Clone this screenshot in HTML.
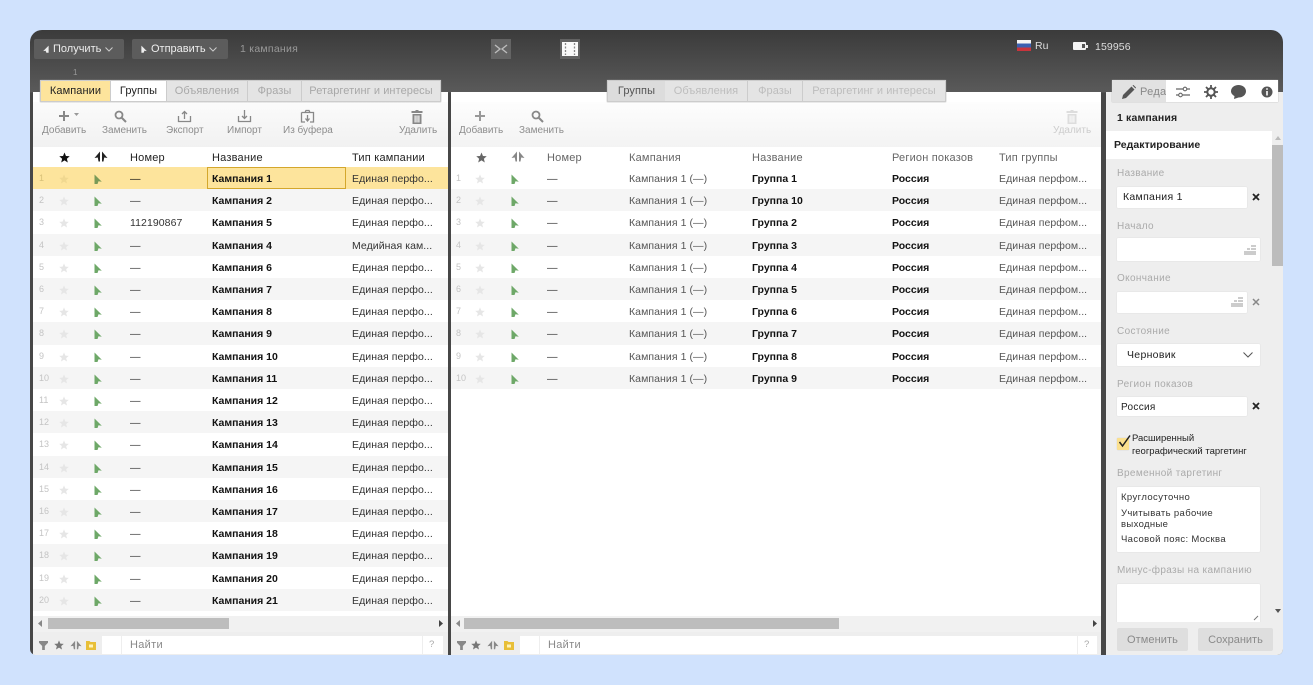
<!DOCTYPE html>
<html lang="ru"><head><meta charset="utf-8"><title>Директ Коммандер</title>
<style>
*{box-sizing:border-box}
html,body{margin:0;padding:0;width:1313px;height:685px;overflow:hidden;background:#d0e2fd;font-family:"Liberation Sans","Noto Sans CJK SC",sans-serif}
#w{position:absolute;left:30px;top:30px;width:1253px;height:625px;border-radius:12px 12px 6px 6px;overflow:hidden;background:linear-gradient(#3b3b3b 0,#5a5a5a 62px,#474747 63px);filter:blur(.3px)}
.a{position:absolute;white-space:nowrap}
#root{position:absolute;left:-30px;top:-30px;width:1313px;height:685px}
.btn{background:#5c5c5c;border-radius:2px;color:#eee;font-size:11px;line-height:20px;height:20px}
.tabs{position:absolute;top:80px;height:22px;border:1px solid #ccc;background:#e4e4e4;z-index:3;box-shadow:0 0 1px #999}
.tab{position:absolute;top:0;height:20px;line-height:21px;font-size:11px;text-align:center;color:#a8a8a8;letter-spacing:.08px;border-right:1px solid #ccc;white-space:nowrap;overflow:hidden}
.panel{position:absolute;top:92px;background:#fff;overflow:hidden;height:563px}
.tl{position:absolute;top:125px;font-size:10px;line-height:12px;color:#8d8d8d;letter-spacing:0;white-space:nowrap}
.hd{position:absolute;top:151px;font-size:11px;line-height:14px;color:#222;letter-spacing:.2px;white-space:nowrap}
.g .hd{color:#666}
.r{position:absolute;height:22.2px;width:100%;font-size:10.5px;line-height:24px;color:#333;letter-spacing:.07px}
.r span{position:absolute;top:0;white-space:nowrap}
.e{background:#f5f5f5}
.sel{background:#fde49c}
.r b{color:#111;letter-spacing:0}
.r .n{font-size:9px;color:#c4c4c4;letter-spacing:0;line-height:22px}
.r svg{position:absolute}
.ic{position:absolute;fill:#888}
.lb{position:absolute;left:1117px;font-size:10px;line-height:12px;color:#aaa;letter-spacing:.35px;white-space:nowrap}
.in{position:absolute;left:1117px;background:#fff;border-radius:1px;box-shadow:0 0 1px #ccc;font-size:10px;color:#222;letter-spacing:.3px;white-space:nowrap}
</style></head><body>
<svg width="0" height="0" style="position:absolute"><defs>
<symbol id="st" viewBox="0 0 12 12"><path d="M6 .5 7.6 4.4 11.7 4.7 8.6 7.3 9.600 11.4 6 9.2 2.4 11.4 3.400 7.3 .3 4.7 4.4 4.4Z"/></symbol>
<symbol id="fl" viewBox="0 0 8 10"><path d="M.5 .5 7.800 7.800 4.500 7.300 3.500 10H.5Z"/></symbol>
<symbol id="tw" viewBox="0 0 14 10"><path d="M6 0 6 10 4.500 10 3.800 6 .5 6.500ZM8 0 8 10 9.500 10 10.200 6 13.500 6.500Z"/></symbol>
<symbol id="fi" viewBox="0 0 10 10"><path d="M0 0H10V2L6.5 5.5V10H3.5V5.5L0 2Z"/></symbol>
<symbol id="ca" viewBox="0 0 10 10"><path d="M0 1H3.5L4.5 2H10V10H0Z" fill="#e8bf38"/><rect x="3" y="4.5" width="4" height="3" fill="#fff3b8"/></symbol>
<symbol id="tr" viewBox="0 0 12 14"><path d="M4.5 0H7.5V1H11.5V3H.5V1H4.5ZM1.5 4H10.5V14H1.5ZM3.5 5.5V12.5H4.7V5.5ZM5.4 5.5V12.5H6.6V5.5ZM7.3 5.5V12.5H8.5V5.5Z"/></symbol>
</defs></svg>
<div id="w"><div id="root">

<div class="a btn" style="left:34px;top:39px;width:90px"><svg class="ic" style="left:9px;top:6px;fill:#eee" width="6" height="8"><use href="#fl" transform="matrix(-1 0 0 1 6 0)"/></svg><span class="a" style="left:19px;top:0">Получить</span><svg class="a" style="left:71px;top:8px" width="8" height="5"><path d="M.5.5 4 4 7.5.5" fill="none" stroke="#ccc"/></svg></div>
<div class="a btn" style="left:132px;top:39px;width:96px"><svg class="ic" style="left:9px;top:6px;fill:#eee" width="6" height="8"><use href="#fl"/></svg><span class="a" style="left:19px;top:0">Отправить</span><svg class="a" style="left:77px;top:8px" width="8" height="5"><path d="M.5.5 4 4 7.5.5" fill="none" stroke="#ccc"/></svg></div>
<div class="a" style="left:240px;top:43px;font-size:10.5px;line-height:13px;color:#999;letter-spacing:.25px">1 кампания</div>
<div class="a" style="left:73px;top:68px;font-size:8px;color:#999">1</div>
<div class="a" style="left:491px;top:39px;width:20px;height:20px;background:#646464"><svg width="20" height="20" class="a" style="left:0;top:0"><path d="M4 6 9 10 4 14M16 6 11 10 16 14" fill="none" stroke="#bbb" stroke-width="1.400"/></svg></div>
<div class="a" style="left:560px;top:39px;width:20px;height:20px;background:#636363"><div class="a" style="left:2px;top:3px;width:16px;height:14px;background:#fafafa"></div><svg width="20" height="20" class="a" style="left:0;top:0"><path d="M5.500 4V16M14.500 4V16" stroke="#888" stroke-width="1.300" stroke-dasharray="2 1.500"/></svg></div>
<div class="a" style="left:1017px;top:40px;width:14px;height:11px;background:linear-gradient(#f4f4f4 0 33%,#3b5fb0 33% 66%,#c8343c 66%)"></div>
<div class="a" style="left:1035px;top:40px;font-size:10.5px;line-height:12px;color:#ddd">Ru</div>
<div class="a" style="left:1073px;top:42px;width:13px;height:8px;background:#f4f4f4;border-radius:1px"></div><div class="a" style="left:1086px;top:45px;width:2px;height:3px;background:#eee"></div><div class="a" style="left:1082px;top:44px;width:3px;height:4px;background:#555"></div>
<div class="a" style="left:1095px;top:41px;font-size:10.5px;line-height:13px;color:#ddd;letter-spacing:.1px">159956</div>

<!-- tabs left -->
<div class="tabs" style="left:40px;width:401px">
<div class="tab" style="left:0;width:70px;background:#fde49c;color:#222">Кампании</div>
<div class="tab" style="left:70px;width:56px;background:#fff;color:#222">Группы</div>
<div class="tab" style="left:126px;width:81px">Объявления</div>
<div class="tab" style="left:207px;width:54px">Фразы</div>
<div class="tab" style="left:261px;width:138px;border:0">Ретаргетинг и интересы</div>
</div>
<!-- tabs middle -->
<div class="tabs" style="left:607px;width:339px">
<div class="tab" style="left:0;width:57px;background:#dcdcdc;color:#555;border:0">Группы</div>
<div class="tab" style="left:57px;width:83px;color:#bdbdbd">Объявления</div>
<div class="tab" style="left:140px;width:55px;color:#bdbdbd">Фразы</div>
<div class="tab" style="left:195px;width:142px;color:#bdbdbd;border:0">Ретаргетинг и интересы</div>
</div>

<!-- left panel -->
<div class="panel" style="left:33px;width:415px"></div>
<div class="a" style="left:33px;top:102px;width:415px;height:45px;background:linear-gradient(#fbfbfb,#f1f1f1)"></div>
<svg class="ic" style="left:58px;top:110px" width="24" height="12"><path d="M5 1H7V5H11V7H7V11H5V7H1V5H5Z"/><path d="M16 3H21L18.500 6Z" fill="#999"/></svg>
<svg class="ic" style="left:114px;top:110px" width="13" height="13"><circle cx="5" cy="5" r="3.500" fill="none" stroke="#888" stroke-width="1.800"/><path d="M7.500 7.500 12 12" stroke="#888" stroke-width="2"/></svg>
<svg class="a" style="left:177px;top:109px" width="15" height="14"><path d="M1.500 7V12.500H13.500V7M7.500 10V2.500M5 5 7.500 2.500 10 5" fill="none" stroke="#888" stroke-width="1.300"/></svg>
<svg class="a" style="left:237px;top:109px" width="15" height="14"><path d="M1.500 7V12.500H13.500V7M7.500 1V9.500M5 7 7.500 9.500 10 7" fill="none" stroke="#888" stroke-width="1.300"/></svg>
<svg class="a" style="left:300px;top:109px" width="15" height="14"><path d="M1.500 3.500H13.500V13H10M5 13H1.500V3.500M5 3.500 6 1.500H9L10 3.500M7.500 6V12M5.500 9.500 7.500 12 9.500 9.500" fill="none" stroke="#888" stroke-width="1.300"/></svg>
<svg class="ic" style="left:411px;top:110px" width="12" height="14"><use href="#tr"/></svg>
<div class="tl" style="left:42px">Добавить</div><div class="tl" style="left:102px">Заменить</div><div class="tl" style="left:166px">Экспорт</div><div class="tl" style="left:227px">Импорт</div><div class="tl" style="left:283px">Из буфера</div><div class="tl" style="left:399px">Удалить</div>
<svg class="a" style="left:59px;top:152px;fill:#111" width="11" height="11"><use href="#st"/></svg>
<svg class="a" style="left:94px;top:151px;fill:#222" width="14" height="11"><use href="#tw"/></svg>
<div class="hd" style="left:130px">Номер</div><div class="hd" style="left:212px">Название</div><div class="hd" style="left:352px">Тип кампании</div>

<div class="a" style="left:33px;top:167px;width:415px;height:445px;overflow:hidden">
<div class="r sel" style="top:0"><span class="n" style="left:6px;color:#d8c078">1</span><svg style="left:26px;top:7px;fill:#f0d890" width="10" height="10"><use href="#st"/></svg><svg style="left:61px;top:7px;fill:#7a9a58" width="8" height="10"><use href="#fl"/></svg><span style="left:97px;color:#111">—</span><span style="left:179px"><b>Кампания 1</b></span><span style="left:319px">Единая перфо...</span><div class="a" style="left:174px;top:0;width:139px;height:22px;border:1px solid #d4a72c"></div></div>
<div class="r e" style="top:22.200px"><span class="n" style="left:6px">2</span><svg style="left:26px;top:7px;fill:#e6e6e6" width="10" height="10"><use href="#st"/></svg><svg style="left:61px;top:7px;fill:#6ea868" width="8" height="10"><use href="#fl"/></svg><span style="left:97px">—</span><span style="left:179px"><b>Кампания 2</b></span><span style="left:319px">Единая перфо...</span></div>
<div class="r" style="top:44.400px"><span class="n" style="left:6px">3</span><svg style="left:26px;top:7px;fill:#e6e6e6" width="10" height="10"><use href="#st"/></svg><svg style="left:61px;top:7px;fill:#6ea868" width="8" height="10"><use href="#fl"/></svg><span style="left:97px">112190867</span><span style="left:179px"><b>Кампания 5</b></span><span style="left:319px">Единая перфо...</span></div>
<div class="r e" style="top:66.600px"><span class="n" style="left:6px">4</span><svg style="left:26px;top:7px;fill:#e6e6e6" width="10" height="10"><use href="#st"/></svg><svg style="left:61px;top:7px;fill:#6ea868" width="8" height="10"><use href="#fl"/></svg><span style="left:97px">—</span><span style="left:179px"><b>Кампания 4</b></span><span style="left:319px">Медийная кам...</span></div>
<div class="r" style="top:88.800px"><span class="n" style="left:6px">5</span><svg style="left:26px;top:7px;fill:#e6e6e6" width="10" height="10"><use href="#st"/></svg><svg style="left:61px;top:7px;fill:#6ea868" width="8" height="10"><use href="#fl"/></svg><span style="left:97px">—</span><span style="left:179px"><b>Кампания 6</b></span><span style="left:319px">Единая перфо...</span></div>
<div class="r e" style="top:111px"><span class="n" style="left:6px">6</span><svg style="left:26px;top:7px;fill:#e6e6e6" width="10" height="10"><use href="#st"/></svg><svg style="left:61px;top:7px;fill:#6ea868" width="8" height="10"><use href="#fl"/></svg><span style="left:97px">—</span><span style="left:179px"><b>Кампания 7</b></span><span style="left:319px">Единая перфо...</span></div>
<div class="r" style="top:133.200px"><span class="n" style="left:6px">7</span><svg style="left:26px;top:7px;fill:#e6e6e6" width="10" height="10"><use href="#st"/></svg><svg style="left:61px;top:7px;fill:#6ea868" width="8" height="10"><use href="#fl"/></svg><span style="left:97px">—</span><span style="left:179px"><b>Кампания 8</b></span><span style="left:319px">Единая перфо...</span></div>
<div class="r e" style="top:155.400px"><span class="n" style="left:6px">8</span><svg style="left:26px;top:7px;fill:#e6e6e6" width="10" height="10"><use href="#st"/></svg><svg style="left:61px;top:7px;fill:#6ea868" width="8" height="10"><use href="#fl"/></svg><span style="left:97px">—</span><span style="left:179px"><b>Кампания 9</b></span><span style="left:319px">Единая перфо...</span></div>
<div class="r" style="top:177.600px"><span class="n" style="left:6px">9</span><svg style="left:26px;top:7px;fill:#e6e6e6" width="10" height="10"><use href="#st"/></svg><svg style="left:61px;top:7px;fill:#6ea868" width="8" height="10"><use href="#fl"/></svg><span style="left:97px">—</span><span style="left:179px"><b>Кампания 10</b></span><span style="left:319px">Единая перфо...</span></div>
<div class="r e" style="top:199.800px"><span class="n" style="left:6px">10</span><svg style="left:26px;top:7px;fill:#e6e6e6" width="10" height="10"><use href="#st"/></svg><svg style="left:61px;top:7px;fill:#6ea868" width="8" height="10"><use href="#fl"/></svg><span style="left:97px">—</span><span style="left:179px"><b>Кампания 11</b></span><span style="left:319px">Единая перфо...</span></div>
<div class="r" style="top:222px"><span class="n" style="left:6px">11</span><svg style="left:26px;top:7px;fill:#e6e6e6" width="10" height="10"><use href="#st"/></svg><svg style="left:61px;top:7px;fill:#6ea868" width="8" height="10"><use href="#fl"/></svg><span style="left:97px">—</span><span style="left:179px"><b>Кампания 12</b></span><span style="left:319px">Единая перфо...</span></div>
<div class="r e" style="top:244.200px"><span class="n" style="left:6px">12</span><svg style="left:26px;top:7px;fill:#e6e6e6" width="10" height="10"><use href="#st"/></svg><svg style="left:61px;top:7px;fill:#6ea868" width="8" height="10"><use href="#fl"/></svg><span style="left:97px">—</span><span style="left:179px"><b>Кампания 13</b></span><span style="left:319px">Единая перфо...</span></div>
<div class="r" style="top:266.400px"><span class="n" style="left:6px">13</span><svg style="left:26px;top:7px;fill:#e6e6e6" width="10" height="10"><use href="#st"/></svg><svg style="left:61px;top:7px;fill:#6ea868" width="8" height="10"><use href="#fl"/></svg><span style="left:97px">—</span><span style="left:179px"><b>Кампания 14</b></span><span style="left:319px">Единая перфо...</span></div>
<div class="r e" style="top:288.600px"><span class="n" style="left:6px">14</span><svg style="left:26px;top:7px;fill:#e6e6e6" width="10" height="10"><use href="#st"/></svg><svg style="left:61px;top:7px;fill:#6ea868" width="8" height="10"><use href="#fl"/></svg><span style="left:97px">—</span><span style="left:179px"><b>Кампания 15</b></span><span style="left:319px">Единая перфо...</span></div>
<div class="r" style="top:310.800px"><span class="n" style="left:6px">15</span><svg style="left:26px;top:7px;fill:#e6e6e6" width="10" height="10"><use href="#st"/></svg><svg style="left:61px;top:7px;fill:#6ea868" width="8" height="10"><use href="#fl"/></svg><span style="left:97px">—</span><span style="left:179px"><b>Кампания 16</b></span><span style="left:319px">Единая перфо...</span></div>
<div class="r e" style="top:333px"><span class="n" style="left:6px">16</span><svg style="left:26px;top:7px;fill:#e6e6e6" width="10" height="10"><use href="#st"/></svg><svg style="left:61px;top:7px;fill:#6ea868" width="8" height="10"><use href="#fl"/></svg><span style="left:97px">—</span><span style="left:179px"><b>Кампания 17</b></span><span style="left:319px">Единая перфо...</span></div>
<div class="r" style="top:355.200px"><span class="n" style="left:6px">17</span><svg style="left:26px;top:7px;fill:#e6e6e6" width="10" height="10"><use href="#st"/></svg><svg style="left:61px;top:7px;fill:#6ea868" width="8" height="10"><use href="#fl"/></svg><span style="left:97px">—</span><span style="left:179px"><b>Кампания 18</b></span><span style="left:319px">Единая перфо...</span></div>
<div class="r e" style="top:377.400px"><span class="n" style="left:6px">18</span><svg style="left:26px;top:7px;fill:#e6e6e6" width="10" height="10"><use href="#st"/></svg><svg style="left:61px;top:7px;fill:#6ea868" width="8" height="10"><use href="#fl"/></svg><span style="left:97px">—</span><span style="left:179px"><b>Кампания 19</b></span><span style="left:319px">Единая перфо...</span></div>
<div class="r" style="top:399.600px"><span class="n" style="left:6px">19</span><svg style="left:26px;top:7px;fill:#e6e6e6" width="10" height="10"><use href="#st"/></svg><svg style="left:61px;top:7px;fill:#6ea868" width="8" height="10"><use href="#fl"/></svg><span style="left:97px">—</span><span style="left:179px"><b>Кампания 20</b></span><span style="left:319px">Единая перфо...</span></div>
<div class="r e" style="top:421.800px"><span class="n" style="left:6px">20</span><svg style="left:26px;top:7px;fill:#e6e6e6" width="10" height="10"><use href="#st"/></svg><svg style="left:61px;top:7px;fill:#6ea868" width="8" height="10"><use href="#fl"/></svg><span style="left:97px">—</span><span style="left:179px"><b>Кампания 21</b></span><span style="left:319px">Единая перфо...</span></div>
</div>

<div class="a" style="left:33px;top:616px;width:415px;height:16px;background:#f1f1f1"></div>
<div class="a" style="left:48px;top:618px;width:181px;height:11px;background:#bdbdbd"></div>
<svg class="a" style="left:38px;top:620px" width="5" height="7"><path d="M4 0V7L0 3.500Z" fill="#888"/></svg>
<svg class="a" style="left:439px;top:620px" width="5" height="7"><path d="M0 0V7L4 3.500Z" fill="#444"/></svg>
<div class="a" style="left:33px;top:632px;width:415px;height:23px;background:#eee"></div>
<svg class="ic" style="left:39px;top:641px" width="9" height="9"><use href="#fi"/></svg>
<svg class="ic" style="left:54px;top:640px;fill:#777" width="10" height="10"><use href="#st"/></svg>
<svg class="ic" style="left:70px;top:640px;fill:#888" width="12" height="10"><use href="#tw"/></svg>
<svg class="a" style="left:86px;top:640px" width="10" height="10"><use href="#ca"/></svg>
<div class="a" style="left:102px;top:636px;width:341px;height:18px;background:#fff"></div>
<div class="a" style="left:121px;top:636px;width:1px;height:18px;background:#eee"></div>
<div class="a" style="left:422px;top:636px;width:1px;height:18px;background:#eee"></div>
<div class="a" style="left:130px;top:638px;font-size:11px;line-height:14px;color:#888;letter-spacing:.3px">Найти</div>
<div class="a" style="left:429px;top:639px;font-size:9.500px;line-height:12px;color:#aaa">?</div>

<!-- middle panel -->
<div class="panel g" style="left:451px;width:650px"></div>
<div class="a" style="left:451px;top:102px;width:650px;height:45px;background:linear-gradient(#fdfdfd,#f3f3f3)"></div>
<svg class="ic" style="left:474px;top:110px;fill:#999" width="12" height="12"><path d="M5 1H7V5H11V7H7V11H5V7H1V5H5Z"/></svg>
<svg class="a" style="left:531px;top:110px" width="13" height="13"><circle cx="5" cy="5" r="3.500" fill="none" stroke="#888" stroke-width="1.800"/><path d="M7.500 7.500 12 12" stroke="#888" stroke-width="2"/></svg>
<svg class="ic" style="left:1066px;top:110px;fill:#ddd" width="12" height="14"><use href="#tr"/></svg>
<div class="tl" style="left:459px">Добавить</div><div class="tl" style="left:519px">Заменить</div><div class="tl" style="left:1053px;color:#ccc">Удалить</div>
<svg class="a" style="left:476px;top:152px;fill:#666" width="11" height="11"><use href="#st"/></svg>
<svg class="a" style="left:511px;top:151px;fill:#888" width="14" height="11"><use href="#tw"/></svg>
<div class="g"><div class="hd" style="left:547px">Номер</div><div class="hd" style="left:629px">Кампания</div><div class="hd" style="left:752px">Название</div><div class="hd" style="left:892px">Регион показов</div><div class="hd" style="left:999px">Тип группы</div></div>

<div class="a" style="left:451px;top:167px;width:650px;height:224px;overflow:hidden">
<div class="r" style="top:0"><span class="n" style="left:5px">1</span><svg style="left:24px;top:7px;fill:#e6e6e6" width="10" height="10"><use href="#st"/></svg><svg style="left:60px;top:7px;fill:#6ea868" width="8" height="10"><use href="#fl"/></svg><span style="left:96px">—</span><span style="left:178px;color:#555">Кампания 1 (—)</span><span style="left:301px"><b>Группа 1</b></span><span style="left:441px"><b>Россия</b></span><span style="left:548px;color:#555">Единая перфом...</span></div>
<div class="r e" style="top:22.200px"><span class="n" style="left:5px">2</span><svg style="left:24px;top:7px;fill:#e6e6e6" width="10" height="10"><use href="#st"/></svg><svg style="left:60px;top:7px;fill:#6ea868" width="8" height="10"><use href="#fl"/></svg><span style="left:96px">—</span><span style="left:178px;color:#555">Кампания 1 (—)</span><span style="left:301px"><b>Группа 10</b></span><span style="left:441px"><b>Россия</b></span><span style="left:548px;color:#555">Единая перфом...</span></div>
<div class="r" style="top:44.400px"><span class="n" style="left:5px">3</span><svg style="left:24px;top:7px;fill:#e6e6e6" width="10" height="10"><use href="#st"/></svg><svg style="left:60px;top:7px;fill:#6ea868" width="8" height="10"><use href="#fl"/></svg><span style="left:96px">—</span><span style="left:178px;color:#555">Кампания 1 (—)</span><span style="left:301px"><b>Группа 2</b></span><span style="left:441px"><b>Россия</b></span><span style="left:548px;color:#555">Единая перфом...</span></div>
<div class="r e" style="top:66.600px"><span class="n" style="left:5px">4</span><svg style="left:24px;top:7px;fill:#e6e6e6" width="10" height="10"><use href="#st"/></svg><svg style="left:60px;top:7px;fill:#6ea868" width="8" height="10"><use href="#fl"/></svg><span style="left:96px">—</span><span style="left:178px;color:#555">Кампания 1 (—)</span><span style="left:301px"><b>Группа 3</b></span><span style="left:441px"><b>Россия</b></span><span style="left:548px;color:#555">Единая перфом...</span></div>
<div class="r" style="top:88.800px"><span class="n" style="left:5px">5</span><svg style="left:24px;top:7px;fill:#e6e6e6" width="10" height="10"><use href="#st"/></svg><svg style="left:60px;top:7px;fill:#6ea868" width="8" height="10"><use href="#fl"/></svg><span style="left:96px">—</span><span style="left:178px;color:#555">Кампания 1 (—)</span><span style="left:301px"><b>Группа 4</b></span><span style="left:441px"><b>Россия</b></span><span style="left:548px;color:#555">Единая перфом...</span></div>
<div class="r e" style="top:111px"><span class="n" style="left:5px">6</span><svg style="left:24px;top:7px;fill:#e6e6e6" width="10" height="10"><use href="#st"/></svg><svg style="left:60px;top:7px;fill:#6ea868" width="8" height="10"><use href="#fl"/></svg><span style="left:96px">—</span><span style="left:178px;color:#555">Кампания 1 (—)</span><span style="left:301px"><b>Группа 5</b></span><span style="left:441px"><b>Россия</b></span><span style="left:548px;color:#555">Единая перфом...</span></div>
<div class="r" style="top:133.200px"><span class="n" style="left:5px">7</span><svg style="left:24px;top:7px;fill:#e6e6e6" width="10" height="10"><use href="#st"/></svg><svg style="left:60px;top:7px;fill:#6ea868" width="8" height="10"><use href="#fl"/></svg><span style="left:96px">—</span><span style="left:178px;color:#555">Кампания 1 (—)</span><span style="left:301px"><b>Группа 6</b></span><span style="left:441px"><b>Россия</b></span><span style="left:548px;color:#555">Единая перфом...</span></div>
<div class="r e" style="top:155.400px"><span class="n" style="left:5px">8</span><svg style="left:24px;top:7px;fill:#e6e6e6" width="10" height="10"><use href="#st"/></svg><svg style="left:60px;top:7px;fill:#6ea868" width="8" height="10"><use href="#fl"/></svg><span style="left:96px">—</span><span style="left:178px;color:#555">Кампания 1 (—)</span><span style="left:301px"><b>Группа 7</b></span><span style="left:441px"><b>Россия</b></span><span style="left:548px;color:#555">Единая перфом...</span></div>
<div class="r" style="top:177.600px"><span class="n" style="left:5px">9</span><svg style="left:24px;top:7px;fill:#e6e6e6" width="10" height="10"><use href="#st"/></svg><svg style="left:60px;top:7px;fill:#6ea868" width="8" height="10"><use href="#fl"/></svg><span style="left:96px">—</span><span style="left:178px;color:#555">Кампания 1 (—)</span><span style="left:301px"><b>Группа 8</b></span><span style="left:441px"><b>Россия</b></span><span style="left:548px;color:#555">Единая перфом...</span></div>
<div class="r e" style="top:199.800px"><span class="n" style="left:5px">10</span><svg style="left:24px;top:7px;fill:#e6e6e6" width="10" height="10"><use href="#st"/></svg><svg style="left:60px;top:7px;fill:#6ea868" width="8" height="10"><use href="#fl"/></svg><span style="left:96px">—</span><span style="left:178px;color:#555">Кампания 1 (—)</span><span style="left:301px"><b>Группа 9</b></span><span style="left:441px"><b>Россия</b></span><span style="left:548px;color:#555">Единая перфом...</span></div>
</div>

<div class="a" style="left:451px;top:616px;width:650px;height:16px;background:#f1f1f1"></div>
<div class="a" style="left:464px;top:618px;width:375px;height:11px;background:#bdbdbd"></div>
<svg class="a" style="left:456px;top:620px" width="5" height="7"><path d="M4 0V7L0 3.500Z" fill="#888"/></svg>
<svg class="a" style="left:1093px;top:620px" width="5" height="7"><path d="M0 0V7L4 3.500Z" fill="#444"/></svg>
<div class="a" style="left:451px;top:632px;width:650px;height:23px;background:#eee"></div>
<svg class="ic" style="left:457px;top:641px" width="9" height="9"><use href="#fi"/></svg>
<svg class="ic" style="left:471px;top:640px;fill:#777" width="10" height="10"><use href="#st"/></svg>
<svg class="ic" style="left:487px;top:640px;fill:#888" width="12" height="10"><use href="#tw"/></svg>
<svg class="a" style="left:504px;top:640px" width="10" height="10"><use href="#ca"/></svg>
<div class="a" style="left:520px;top:636px;width:577px;height:18px;background:#fff"></div>
<div class="a" style="left:539px;top:636px;width:1px;height:18px;background:#eee"></div>
<div class="a" style="left:1077px;top:636px;width:1px;height:18px;background:#eee"></div>
<div class="a" style="left:548px;top:638px;font-size:11px;line-height:14px;color:#888;letter-spacing:.3px">Найти</div>
<div class="a" style="left:1084px;top:639px;font-size:9.500px;line-height:12px;color:#aaa">?</div>

<!-- right panel -->
<div class="a" style="left:1106px;top:92px;width:177px;height:563px;background:#eee"></div>
<div class="a" style="left:1112px;top:80px;width:166px;height:22px;background:#fff;box-shadow:0 0 1px #aaa"></div>
<div class="a" style="left:1112px;top:80px;width:54px;height:22px;background:#e2e2e2;overflow:hidden"><span class="a" style="left:28px;top:5px;font-size:11px;line-height:14px;color:#888;letter-spacing:.3px">Реда</span></div>
<svg class="a" style="left:1122px;top:85px" width="14" height="14"><path d="M0 14 1 10 9.500 1.500 12.500 4.500 4 13ZM10.500.5 11.500 0 14 2.500 13.500 3.500Z" fill="#555"/></svg>
<svg class="a" style="left:1176px;top:85px" width="14" height="14"><path d="M0 4H14M0 10H14" stroke="#666" stroke-width="1.200"/><circle cx="9" cy="4" r="1.800" fill="#fff" stroke="#666" stroke-width="1.100"/><circle cx="4.500" cy="10" r="1.800" fill="#fff" stroke="#666" stroke-width="1.100"/></svg>
<svg class="a" style="left:1204px;top:85px" width="14" height="14"><circle cx="7" cy="7" r="3.700" fill="none" stroke="#555" stroke-width="2"/><path d="M7 0V3M7 11V14M0 7H3M11 7H14M2 2 4 4M10 10 12 12M12 2 10 4M4 10 2 12" stroke="#555" stroke-width="1.800"/></svg>
<svg class="a" style="left:1231px;top:85px" width="15" height="14"><path d="M7.500 0C11.600 0 15 2.600 15 6.200S11.600 12.500 7.500 12.500L3 14 3.500 11C1.400 9.800 0 8.200 0 6.200 0 2.600 3.400 0 7.500 0Z" fill="#555"/></svg>
<svg class="a" style="left:1261px;top:86px" width="12" height="12"><circle cx="6" cy="6" r="5.500" fill="#555"/><path d="M6 2.300V3.800M6 5V9.500" stroke="#fff" stroke-width="1.600"/></svg>

<div class="a" style="left:1117px;top:111px;font-size:10.500px;line-height:14px;font-weight:bold;color:#222;letter-spacing:.15px">1 кампания</div>
<div class="a" style="left:1106px;top:131px;width:166px;height:28px;background:#fff"></div>
<div class="a" style="left:1114px;top:138px;font-size:10.500px;line-height:14px;font-weight:bold;color:#222;letter-spacing:.05px">Редактирование</div>
<div class="a" style="left:1272px;top:145px;width:11px;height:121px;background:#bcbcbc"></div>
<svg class="a" style="left:1275px;top:136px" width="6" height="4"><path d="M3 0 6 4H0Z" fill="#bbb"/></svg>
<svg class="a" style="left:1275px;top:609px" width="6" height="4"><path d="M0 0H6L3 4Z" fill="#555"/></svg>

<div class="lb" style="top:168px">Название</div>
<div class="in" style="top:187px;width:130px;height:21px;line-height:21px;padding-left:6px;font-size:10.500px">Кампания 1</div>
<svg class="a" style="left:1252px;top:193px" width="8" height="8"><path d="M1 1 7 7M7 1 1 7" stroke="#222" stroke-width="1.800"/></svg>
<div class="lb" style="top:221px">Начало</div>
<div class="in" style="top:238px;width:143px;height:23px"></div>
<svg class="a" style="left:1244px;top:245px" width="12" height="10"><path d="M7 0H12V2H7ZM7 3H12V5H7ZM3 3H6V5H3ZM0 6H12V10H0Z" fill="#ccc"/></svg>
<div class="lb" style="top:273px">Окончание</div>
<div class="in" style="top:292px;width:130px;height:21px"></div>
<svg class="a" style="left:1231px;top:297px" width="12" height="10"><path d="M7 0H12V2H7ZM7 3H12V5H7ZM3 3H6V5H3ZM0 6H12V10H0Z" fill="#ccc"/></svg>
<svg class="a" style="left:1252px;top:298px" width="8" height="8"><path d="M1 1 7 7M7 1 1 7" stroke="#888" stroke-width="1.500"/></svg>
<div class="lb" style="top:326px">Состояние</div>
<div class="in" style="top:344px;width:143px;height:22px;line-height:22px;padding-left:10px;font-size:10.500px">Черновик</div>
<svg class="a" style="left:1243px;top:352px" width="10" height="6"><path d="M.5.500 5 5 9.500.500" fill="none" stroke="#555"/></svg>
<div class="lb" style="top:379px">Регион показов</div>
<div class="in" style="top:397px;width:130px;height:19px;line-height:21px;padding-left:4px">Россия</div>
<svg class="a" style="left:1252px;top:402px" width="8" height="8"><path d="M1 1 7 7M7 1 1 7" stroke="#222" stroke-width="1.800"/></svg>
<div class="a" style="left:1117px;top:438px;width:12px;height:12px;background:#fbe08e;border-radius:1px;box-shadow:0 0 1px #bbb"></div>
<svg class="a" style="left:1117px;top:434px" width="15" height="14"><path d="M2.500 8 5.500 12 13 1.500" fill="none" stroke="#222" stroke-width="1.500"/></svg>
<div class="a" style="left:1132px;top:432px;font-size:9.500px;line-height:13px;color:#222;letter-spacing:0">Расширенный<br>географический таргетинг</div>
<div class="lb" style="top:468px">Временной таргетинг</div>
<div class="in" style="top:487px;width:143px;height:65px"></div>
<div class="a" style="left:1121px;top:492px;font-size:9.500px;line-height:12px;color:#333;letter-spacing:.4px">Круглосуточно</div>
<div class="a" style="left:1121px;top:508px;font-size:9.500px;line-height:11px;color:#333;letter-spacing:.35px">Учитывать рабочие<br>выходные</div>
<div class="a" style="left:1121px;top:534px;font-size:9.500px;line-height:12px;color:#333;letter-spacing:.35px">Часовой пояс: Москва</div>
<div class="lb" style="top:565px">Минус-фразы на кампанию</div>
<div class="in" style="top:584px;width:143px;height:40px"></div>
<svg class="a" style="left:1253px;top:615px" width="6" height="6"><path d="M1 5 5 1" stroke="#777"/></svg>
<div class="a" style="left:1106px;top:622px;width:166px;height:33px;background:#eee"></div>
<div class="a" style="left:1117px;top:628px;width:71px;height:23px;background:#dedede;border-radius:2px;font-size:11px;line-height:24px;text-align:center;color:#8a8a8a;letter-spacing:.1px">Отменить</div>
<div class="a" style="left:1198px;top:628px;width:75px;height:23px;background:#dedede;border-radius:2px;font-size:11px;line-height:24px;text-align:center;color:#8a8a8a;letter-spacing:0">Сохранить</div>

</div></div>
</body></html>
